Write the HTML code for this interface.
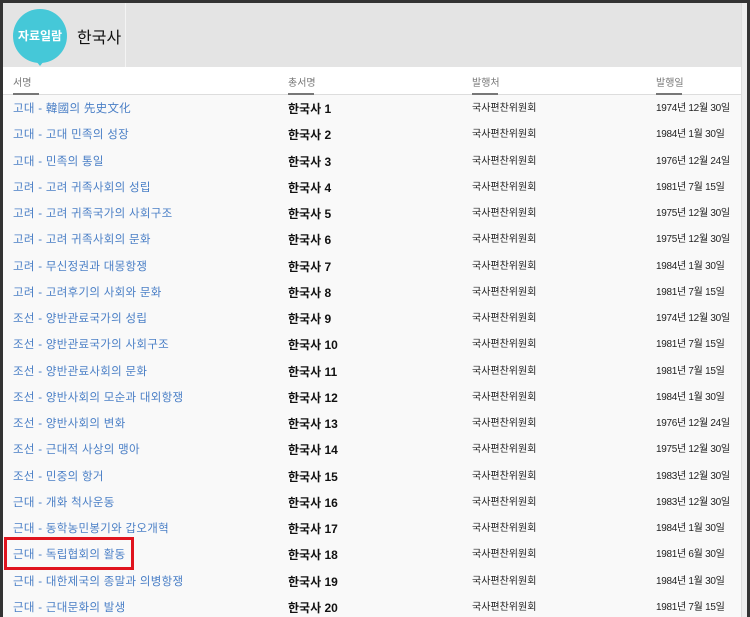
<!DOCTYPE html><html><head><meta charset="utf-8"><style>
body{margin:0;width:750px;height:617px;overflow:hidden;background:#333;font-family:"Liberation Sans","Noto Sans CJK KR",sans-serif;}
#f{position:absolute;left:3px;top:3px;width:744px;height:614px;background:#f9f9f9;overflow:hidden}
#hd{position:absolute;left:0;top:0;width:738px;height:64px;background:#e4e4e4}
#hd .div{position:absolute;left:122px;top:0;width:1px;height:64px;background:#f4f4f4}
#rs{position:absolute;left:738px;top:0;width:6px;height:614px;background:#eee;border-left:1px solid #ddd}
.c{position:absolute;left:10px;top:6px;width:54px;height:54px;border-radius:50%;background:#45c8d8;color:#fff;font-size:12px;font-weight:bold;text-align:center;line-height:54px}
.c:after{content:"";position:absolute;left:23px;top:52px;border:4px solid transparent;border-top:5px solid #45c8d8}
.t{position:absolute;left:74px;top:21px;font-size:16px;color:#111}
#th{position:absolute;left:0;top:64px;width:738px;height:27px;background:#fff;border-bottom:1px solid #ddd}
.h{position:absolute;top:7px;font-size:10px;color:#777}
.h:after{content:"";position:absolute;left:0;top:19px;width:26px;height:2px;background:#777}
.r{position:absolute;left:0;height:26px;width:738px;font-size:11.5px;line-height:20px}
.r span{position:absolute;top:0}
.a{left:10px;color:#4a7fc6;letter-spacing:0.3px}.b{left:285px;font-weight:bold;font-size:12px;color:#111}.p{left:469px;color:#222;font-size:10px}.d{left:653px;color:#222;font-size:10px;letter-spacing:-0.3px}
#red{position:absolute;left:1px;top:534px;width:124px;height:27px;border:3px solid #e0141e}
</style></head><body><div id="f">
<div id="hd"><div class="c">자료일람</div><div class="t">한국사</div><div class="div"></div></div>
<div id="rs"></div>
<div id="th"><span class="h" style="left:10px">서명</span><span class="h" style="left:285px">총서명</span><span class="h" style="left:469px">발행처</span><span class="h" style="left:653px">발행일</span></div>
<div id="rows"></div>
<script>
var d=[["고대 - 韓國의 先史文化","1974년 12월 30일"],["고대 - 고대 민족의 성장","1984년 1월 30일"],["고대 - 민족의 통일","1976년 12월 24일"],["고려 - 고려 귀족사회의 성립","1981년 7월 15일"],["고려 - 고려 귀족국가의 사회구조","1975년 12월 30일"],["고려 - 고려 귀족사회의 문화","1975년 12월 30일"],["고려 - 무신정권과 대몽항쟁","1984년 1월 30일"],["고려 - 고려후기의 사회와 문화","1981년 7월 15일"],["조선 - 양반관료국가의 성립","1974년 12월 30일"],["조선 - 양반관료국가의 사회구조","1981년 7월 15일"],["조선 - 양반관료사회의 문화","1981년 7월 15일"],["조선 - 양반사회의 모순과 대외항쟁","1984년 1월 30일"],["조선 - 양반사회의 변화","1976년 12월 24일"],["조선 - 근대적 사상의 맹아","1975년 12월 30일"],["조선 - 민중의 항거","1983년 12월 30일"],["근대 - 개화 척사운동","1983년 12월 30일"],["근대 - 동학농민봉기와 갑오개혁","1984년 1월 30일"],["근대 - 독립협회의 활동","1981년 6월 30일"],["근대 - 대한제국의 종말과 의병항쟁","1984년 1월 30일"],["근대 - 근대문화의 발생","1981년 7월 15일"]];
var h="";for(var i=0;i<d.length;i++){h+='<div class="r" style="top:'+(96+i*26.26)+'px"><span class="a">'+d[i][0]+'</span><span class="b">한국사 '+(i+1)+'</span><span class="p">국사편찬위원회</span><span class="d">'+d[i][1]+'</span></div>';}
document.getElementById("rows").innerHTML=h;
</script>
<div id="red"></div>
</div></body></html>
